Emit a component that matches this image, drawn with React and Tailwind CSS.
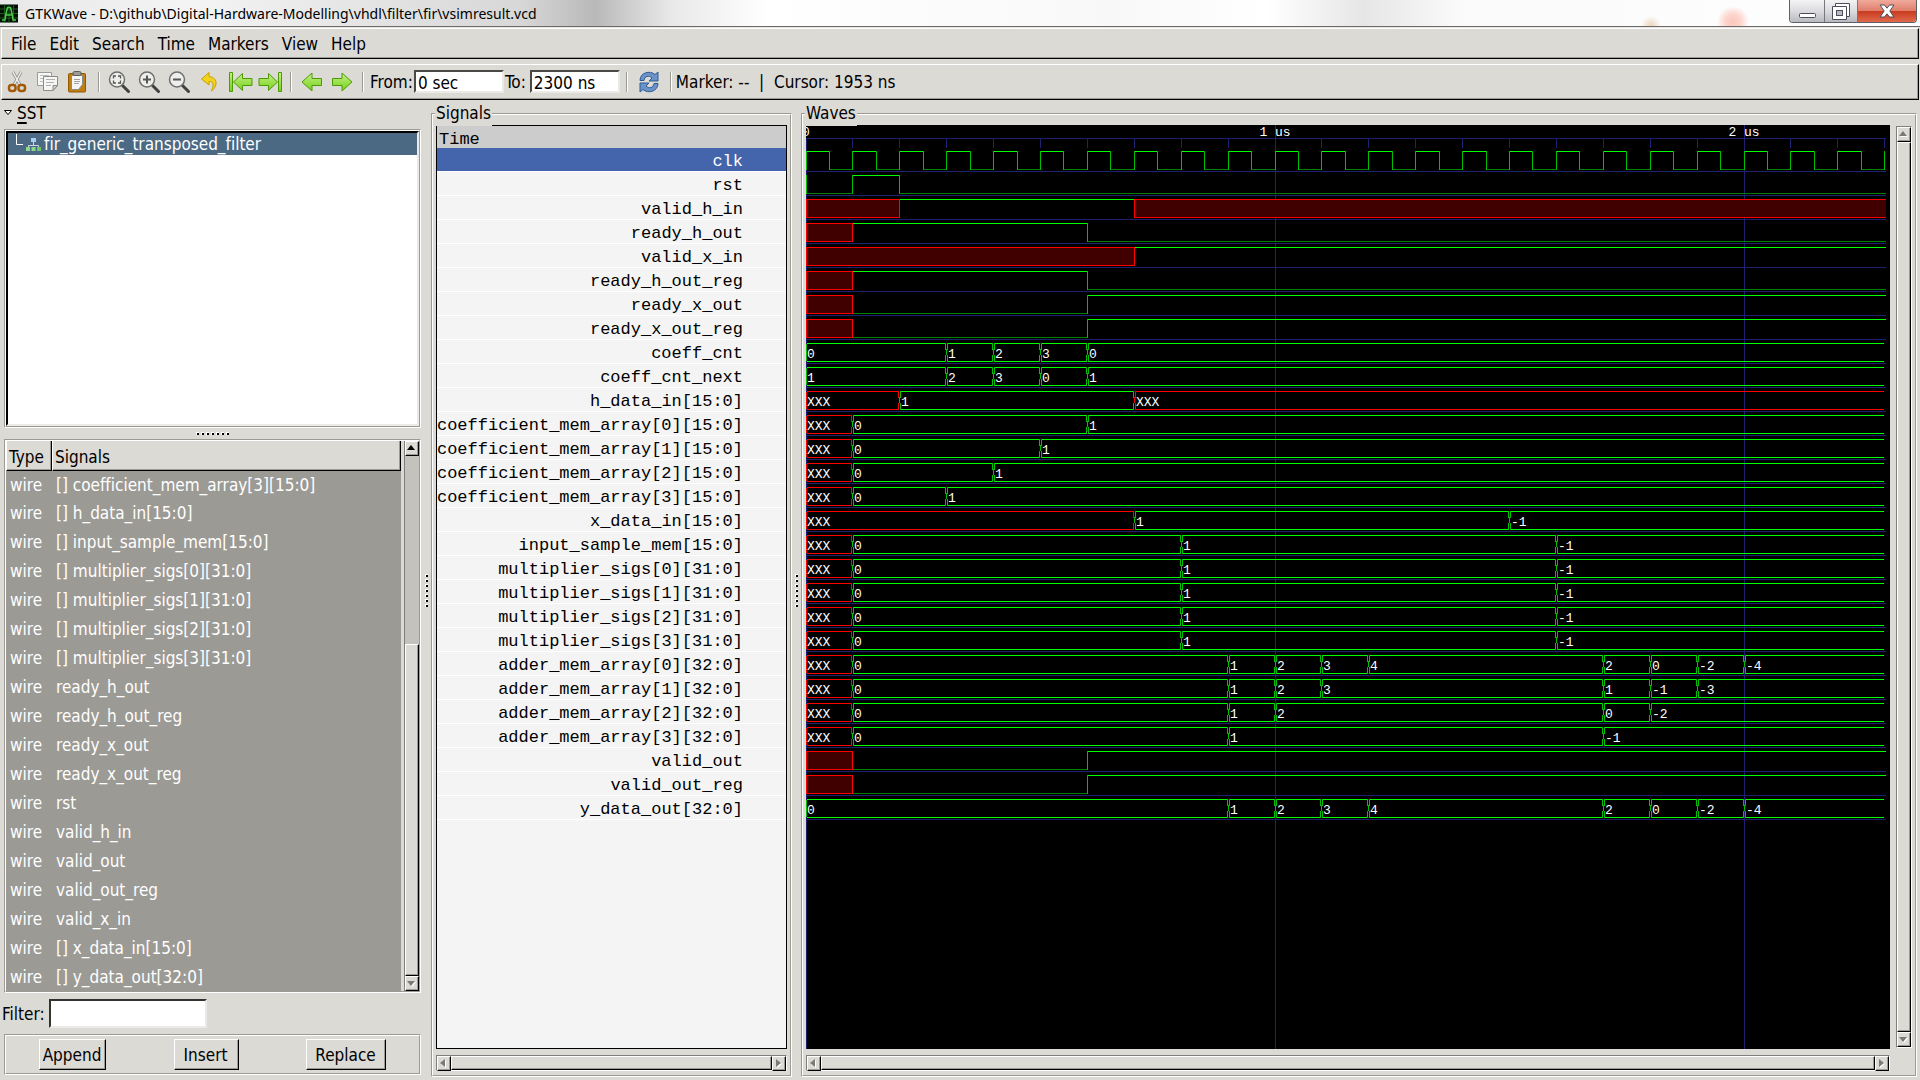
import React from "react";

/* ---------- data ---------- */

const ADDER0 = [[0, "XXX"], [1, "0"], [9, "1"], [10, "2"], [11, "3"], [12, "4"], [17, "2"], [18, "0"], [19, "-2"], [20, "-4"]];
const SAMPLE = [[0, "XXX"], [1, "0"], [8, "1"], [16, "-1"]];
const CLOCK = Array.from({ length: 47 }, (_, i) => [i / 2, i % 2 ? "0" : "1"]);

const SIGNALS = [
  { name: "clk", kind: "bit", v: CLOCK },
  { name: "rst", kind: "bit", v: [[0, "0"], [1, "1"], [2, "0"]] },
  { name: "valid_h_in", kind: "bit", v: [[0, "x"], [2, "1"], [7, "x"]] },
  { name: "ready_h_out", kind: "bit", v: [[0, "x"], [1, "1"], [6, "0"]] },
  { name: "valid_x_in", kind: "bit", v: [[0, "x"], [7, "1"]] },
  { name: "ready_h_out_reg", kind: "bit", v: [[0, "x"], [1, "1"], [6, "0"]] },
  { name: "ready_x_out", kind: "bit", v: [[0, "x"], [1, "0"], [6, "1"]] },
  { name: "ready_x_out_reg", kind: "bit", v: [[0, "x"], [1, "0"], [6, "1"]] },
  { name: "coeff_cnt", kind: "bus", v: [[0, "0"], [3, "1"], [4, "2"], [5, "3"], [6, "0"]] },
  { name: "coeff_cnt_next", kind: "bus", v: [[0, "1"], [3, "2"], [4, "3"], [5, "0"], [6, "1"]] },
  { name: "h_data_in[15:0]", kind: "bus", v: [[0, "XXX"], [2, "1"], [7, "XXX"]] },
  { name: "coefficient_mem_array[0][15:0]", kind: "bus", v: [[0, "XXX"], [1, "0"], [6, "1"]] },
  { name: "coefficient_mem_array[1][15:0]", kind: "bus", v: [[0, "XXX"], [1, "0"], [5, "1"]] },
  { name: "coefficient_mem_array[2][15:0]", kind: "bus", v: [[0, "XXX"], [1, "0"], [4, "1"]] },
  { name: "coefficient_mem_array[3][15:0]", kind: "bus", v: [[0, "XXX"], [1, "0"], [3, "1"]] },
  { name: "x_data_in[15:0]", kind: "bus", v: [[0, "XXX"], [7, "1"], [15, "-1"]] },
  { name: "input_sample_mem[15:0]", kind: "bus", v: SAMPLE },
  { name: "multiplier_sigs[0][31:0]", kind: "bus", v: SAMPLE },
  { name: "multiplier_sigs[1][31:0]", kind: "bus", v: SAMPLE },
  { name: "multiplier_sigs[2][31:0]", kind: "bus", v: SAMPLE },
  { name: "multiplier_sigs[3][31:0]", kind: "bus", v: SAMPLE },
  { name: "adder_mem_array[0][32:0]", kind: "bus", v: ADDER0 },
  { name: "adder_mem_array[1][32:0]", kind: "bus", v: [[0, "XXX"], [1, "0"], [9, "1"], [10, "2"], [11, "3"], [17, "1"], [18, "-1"], [19, "-3"]] },
  { name: "adder_mem_array[2][32:0]", kind: "bus", v: [[0, "XXX"], [1, "0"], [9, "1"], [10, "2"], [17, "0"], [18, "-2"]] },
  { name: "adder_mem_array[3][32:0]", kind: "bus", v: [[0, "XXX"], [1, "0"], [9, "1"], [17, "-1"]] },
  { name: "valid_out", kind: "bit", v: [[0, "x"], [1, "0"], [6, "1"]] },
  { name: "valid_out_reg", kind: "bit", v: [[0, "x"], [1, "0"], [6, "1"]] },
  { name: "y_data_out[32:0]", kind: "bus", v: [[0, "0"], ...ADDER0.slice(2)] },
];

const FACILITIES = [
  "[] coefficient_mem_array[3][15:0]", "[] h_data_in[15:0]", "[] input_sample_mem[15:0]",
  "[] multiplier_sigs[0][31:0]", "[] multiplier_sigs[1][31:0]", "[] multiplier_sigs[2][31:0]", "[] multiplier_sigs[3][31:0]",
  "ready_h_out", "ready_h_out_reg", "ready_x_out", "ready_x_out_reg", "rst", "valid_h_in", "valid_out", "valid_out_reg",
  "valid_x_in", "[] x_data_in[15:0]", "[] y_data_out[32:0]",
];

/* ---------- waveform drawing ---------- */

const px = (t) => Math.floor(t * 46.9 + 0.01);
const END = 1080;

function BitTrace({ v, top }) {
  const bot = top + 18;
  return v.map(([t, s], i) => {
    const a = px(t);
    const last = i === v.length - 1;
    const b = last ? (t === 23 ? a : END) : px(v[i + 1][0]);
    if (s === "x")
      return (
        <g key={i}>
          <rect x={a} y={top} width={b - a + (last ? 0 : 1)} height={19} fill="#400000" />
          <path d={`M${a} ${top}.5H${b}M${a} ${bot}.5H${b}M${a}.5 ${top}V${bot + 1}${last ? "" : `M${b}.5 ${top}V${bot + 1}`}`} stroke="#ff0000" fill="none" />
        </g>
      );
    const edge = i === 0 || v[i - 1][1] !== "x";
    const from = edge ? a : a + 1;
    return (
      <g key={i} fill="none">
        {b > a && <path d={s === "1" ? `M${from} ${top}.5H${b}` : `M${from} ${bot}.5H${b}`} stroke={s === "1" ? "#00ff00" : "#008000"} />}
        {edge && <path d={`M${a}.5 ${top}V${bot + 1}`} stroke="#00c000" />}
      </g>
    );
  });
}

function BusTrace({ v, top }) {
  const bot = top + 18;
  const mid = top + 9;
  return v.map(([t, s], i) => {
    const first = i === 0;
    const last = i === v.length - 1;
    const a = px(t);
    const b = last ? END - 2 : px(v[i + 1][0]);
    const red = s === "XXX";
    const l = first ? a + 1 : a + 2;
    const r = last ? b : b - 1;
    const side = red ? "#ff0000" : "#00c000";
    return (
      <g key={i} fill="none">
        <path d={`M${l} ${top}.5H${r}M${l} ${bot}.5H${r}`} stroke={red ? "#ff0000" : "#00ff00"} />
        <path d={first ? `M${a}.5 ${top + 1}V${bot}` : `M${a + 1}.5 ${top}V${top + 4}L${a}.5 ${mid}L${a + 1}.5 ${bot - 3}V${bot + 1}`} stroke={side} />
        {!last && <path d={`M${b - 1}.5 ${top}V${top + 4}L${b}.5 ${mid}L${b - 1}.5 ${bot - 3}V${bot + 1}`} stroke={side} />}
        <text x={first ? a + 1 : a + 2} y={top + 15} fill="#ffffff">{s}</text>
      </g>
    );
  });
}

function WaveCanvas() {
  return (
    <svg role="img" aria-label="Waveforms" className="block h-full w-full bg-black text-[13px] [font-family:'Liberation_Mono',monospace]">
      <g shapeRendering="crispEdges" stroke="#202070" fill="none">
        <path d={`M0 13.5H${END}M0.5 13V924`} />
        <path d={Array.from({ length: 23 }, (_, i) => `M${px(i + 1)}.5 13V23`).join("")} />
        <path d={SIGNALS.map((_, i) => `M0 ${46 + 24 * i}.5H${END}`).join("")} />
        <path d={`M${px(10)}.5 0V2000M${px(20)}.5 0V2000`} />
      </g>
      <g fill="#ffffff" textAnchor="middle">
        <text x="0" y="11">0</text>
        <text x={px(10)} y="11">1 us</text>
        <text x={px(20)} y="11">2 us</text>
      </g>
      <g shapeRendering="crispEdges">
        {SIGNALS.map((s, i) =>
          s.kind === "bit" ? <BitTrace key={s.name} v={s.v} top={26 + 24 * i} /> : <BusTrace key={s.name} v={s.v} top={26 + 24 * i} />
        )}
      </g>
    </svg>
  );
}

/* ---------- widgets ---------- */

function Etched({ className = "", inner = "", children }) {
  return (
    <div className={`border border-t-[#9c9a94] border-l-[#9c9a94] border-r-white border-b-white ${className}`}>
      <div className={`h-full w-full border border-t-white border-l-white border-r-[#9c9a94] border-b-[#9c9a94] ${inner}`}>{children}</div>
    </div>
  );
}

function Raised({ as: Tag = "div", className = "", inner = "", children, ...rest }) {
  return (
    <Tag className={`border border-t-white border-l-white border-r-black border-b-black bg-[#dcdad5] ${className}`} {...rest}>
      <span className={`flex h-full w-full items-center border-r border-b border-[#9c9a94] ${inner}`}>{children}</span>
    </Tag>
  );
}

const ARROWS = { up: "M0 6L4 1L8 6Z", down: "M0 2L4 7L8 2Z", left: "M6 0L1 4L6 8Z", right: "M2 0L7 4L2 8Z" };

function ScrollButton({ dir, active }) {
  return (
    <Raised as="button" type="button" aria-label={`Scroll ${dir}`} className="h-[15px] w-[14px] shrink-0" inner="justify-center">
      <svg viewBox="0 0 9 9" className="h-[9px] w-[9px]">
        {!active && <path d={ARROWS[dir]} transform="translate(1 1)" fill="#fff" />}
        <path d={ARROWS[dir]} fill={active ? "#000" : "#7c7a76"} />
      </svg>
    </Raised>
  );
}

function HScroll() {
  return (
    <div className="flex h-4 border border-t-[#807e7a] border-l-[#807e7a] border-r-white border-b-white bg-[#c3c2bd]">
      <ScrollButton dir="left" />
      <Raised className="flex-1" />
      <ScrollButton dir="right" />
    </div>
  );
}

function Dots({ vertical }) {
  return (
    <div className={`flex gap-[2px] ${vertical ? "flex-col" : ""}`}>
      {Array.from({ length: 7 }, (_, i) => (
        <span key={i} className="h-[3px] w-[3px] border-t border-l border-t-white border-l-white bg-black" />
      ))}
    </div>
  );
}

const Sep = ({ className = "" }) => <span className={`h-5 w-[2px] shrink-0 border-l border-[#9c9a94] bg-white ${className}`} />;

function Tool({ label, children, className = "w-[30px]" }) {
  return (
    <button type="button" aria-label={label} className={`flex h-7 shrink-0 items-center justify-center ${className}`}>
      <svg viewBox="0 0 24 24" className="h-6 w-6" fill="none">{children}</svg>
    </button>
  );
}

function Field({ label, value, gap }) {
  return (
    <label className={`flex items-center ${gap}`}>
      {label}
      <input defaultValue={value} className="h-[23px] w-[90px] border-2 border-t-[#4a4945] border-l-[#4a4945] border-r-[#eceae6] border-b-[#eceae6] bg-white pt-[2px] pl-[2px] outline-none" />
    </label>
  );
}

function Lens({ children }) {
  return (
    <>
      <path d="M15.5 15.5L21.5 21.5" stroke="#3f4242" strokeWidth="3" strokeLinecap="round" />
      <circle cx="10" cy="9.500" r="7.500" fill="#eeeeec" stroke="#6d706b" strokeWidth="1.500" />
      {children}
    </>
  );
}

const GREEN = { fill: "url(#green)", stroke: "#4e9a06", strokeWidth: 1, strokeLinejoin: "round" };

/* ---------- page ---------- */

function TitleBar() {
  return (
    <header className="flex h-[26px] shrink-0 items-center bg-[radial-gradient(circle_at_1651px_26px,#ecd3b8_0,transparent_10px),radial-gradient(circle_at_1733px_22px,#fbc6bb_0,#fdd6ce_8px,transparent_16px),linear-gradient(90deg,#e8e8e8_0,#f4f4f4_10%,#dcdcdc_24%,#d8d8d8_27%,#b9b9b9_31%,#e9e9e9_35%,#fff_40%,#f8f8f8_58%,#fff_66%,#e6e6e6_71%,#fafafa_76%,#fff_100%)] [font-family:'Noto_Sans',sans-serif]">
      <svg viewBox="0 0 18 18" className="h-[19px] w-[18px] shrink-0">
        <rect width="18" height="18" fill="#031003" />
        <path d="M0 4.500H18M0 9H18M0 13.500H18M4.500 0V18M9 0V18M13.500 0V18" stroke="#1c5c1c" />
        <path d="M2 15.500H5L6 9L7.500 3H10.500L12 9L13 15.500H16M6 10.500H12" stroke="#4cc84c" strokeWidth="1.500" fill="none" />
      </svg>
      <h1 className="ml-[7px] pt-[2px] text-sm text-black">GTKWave - D:\github\Digital-Hardware-Modelling\vhdl\filter\fir\vsimresult.vcd</h1>
      <div className="mr-[3px] mb-[3px] ml-auto flex h-[23px] overflow-hidden rounded-b-[4px] border border-t-0 border-[#5f5f66]">
        <button type="button" aria-label="Minimize" className="flex w-[34px] items-end justify-center bg-linear-to-b from-[#f3f3f4] via-[#dcdcdf] to-[#b9bac0] pb-[4px]">
          <svg viewBox="0 0 17 5" className="h-[5px] w-[17px]"><rect x=".5" y=".5" width="16" height="4" rx="1" fill="#fff" stroke="#4b4d5c" /></svg>
        </button>
        <button type="button" aria-label="Restore" className="flex w-[34px] items-center justify-center border-x border-[#77777e] bg-linear-to-b from-[#f3f3f4] via-[#dcdcdf] to-[#b9bac0]">
          <svg viewBox="0 0 18 17" className="h-[17px] w-[18px]">
            <path d="M3.500 .5H17.500V13.500H3.500Z" fill="#fff" stroke="#4b4d5c" />
            <path d="M.5 3.500H14.500V16.500H.5Z" fill="#fff" stroke="#4b4d5c" />
            <rect x="4.500" y="7.500" width="6" height="5" fill="#b9bac0" stroke="#4b4d5c" />
          </svg>
        </button>
        <button type="button" aria-label="Close" className="flex w-[58px] items-center justify-center bg-[linear-gradient(180deg,#f0aa9c_0,#e07f6c_48%,#c93c20_52%,#e0694c_100%)]">
          <svg viewBox="0 0 16 14" className="h-[14px] w-4">
            <path d="M1 1H5.500L8 4.200L10.500 1H15L10.800 7L15 13H10.500L8 9.800L5.500 13H1L5.200 7Z" fill="#fff" stroke="#4b4d5c" />
          </svg>
        </button>
      </div>
    </header>
  );
}

function Toolbar() {
  return (
    <Raised className="mx-px mt-[5px] h-9 shrink-0" inner="">
      <Tool label="Cut">
        <path d="M8 2L15 15M16 2L9 15" stroke="#8f918d" strokeWidth="3" />
        <path d="M8 2L15 15M16 2L9 15" stroke="#eeeeec" strokeWidth="1.500" />
        <rect x="4" y="15" width="6.500" height="6" rx="2.500" stroke="#a35a08" strokeWidth="2.500" />
        <rect x="13.500" y="15" width="6.500" height="6" rx="2.500" stroke="#a35a08" strokeWidth="2.500" />
      </Tool>
      <Tool label="Copy">
        <path d="M2.500 2.500H16.500V15.500H2.500Z" fill="#f6f6f5" stroke="#9a9c98" />
        <path d="M5 5.500H14M5 8.500H8M5 11.500H8" stroke="#bcbdb9" />
        <path d="M8.500 6.500H22.500V15.500L18 20.500H8.500Z" fill="#f6f6f5" stroke="#8a8c88" />
        <path d="M11 9.500H20M11 12.500H19M11 15.500H16" stroke="#b0b1ad" />
        <path d="M22.500 15.500H18V20.500Z" fill="#d3d4d0" stroke="#8a8c88" />
      </Tool>
      <Tool label="Paste">
        <rect x="3.500" y="3.500" width="17" height="18.500" rx="1" fill="#c17d11" stroke="#8f5902" />
        <path d="M6.500 5.500H17.500V14.500L13.500 19.500H6.500Z" fill="#f6f6f5" stroke="#8a8c88" />
        <path d="M9 9.500H15M9 11.500H15M9 13.500H14" stroke="#a0a19d" />
        <rect x="8" y="1.500" width="8" height="4" rx="1.500" fill="#9a9c98" stroke="#5b5d59" />
      </Tool>
      <Sep className="mr-[4px] ml-[6px]" />
      <Tool label="Zoom fit">
        <Lens><path d="M6.500 8.500V6H9M11 6H13.500V8.500M13.500 10.500V13H11M9 13H6.500V10.500" stroke="#555753" strokeWidth="1.300" /></Lens>
      </Tool>
      <Tool label="Zoom in"><Lens><path d="M6 9.500H14M10 5.500V13.500" stroke="#555753" strokeWidth="2" /></Lens></Tool>
      <Tool label="Zoom out"><Lens><path d="M6 9.500H14" stroke="#555753" strokeWidth="2" /></Lens></Tool>
      <Tool label="Zoom undo" className="w-8">
        <path d="M11 2.500L3.500 9L11 15V11.500C15 11.500 16.500 14 13.500 21C19 17 21 8 11 6.500Z" fill="#f4d21c" stroke="#c4a000" strokeLinejoin="round" />
      </Tool>
      <Tool label="Zoom to start" className="w-[29px]">
        <rect x=".5" y="2.500" width="3" height="19" {...GREEN} />
        <path d="M4.500 12L13.500 3.500V8.500H23V15.500H13.500V20.500Z" {...GREEN} />
      </Tool>
      <Tool label="Zoom to end" className="w-[29px]">
        <rect x="20.500" y="2.500" width="3" height="19" {...GREEN} />
        <path d="M19.500 12L10.500 3.500V8.500H1V15.500H10.500V20.500Z" {...GREEN} />
      </Tool>
      <Sep className="mr-[5px] ml-[6px]" />
      <Tool label="Previous edge"><path d="M2 12L12 3V8.500H21.500V15.500H12V21Z" {...GREEN} /></Tool>
      <Tool label="Next edge"><path d="M22 12L12 3V8.500H2.500V15.500H12V21Z" {...GREEN} /></Tool>
      <Sep className="mr-[6px] ml-[5px]" />
      <Field label="From:" value="0 sec" gap="gap-px" />
      <Field label="To:" value="2300 ns" gap="ml-px gap-[4px]" />
      <Sep className="mr-[4px] ml-[6px]" />
      <Tool label="Reload" className="w-[34px]">
        <path d="M3 10.500C3 2.500 13 0 18 4.500L21 2V11H12L15 8C12 5 7.500 6 7 10.500Z" fill="#6a94c8" stroke="#2e5a94" strokeLinejoin="round" />
        <path d="M21 13.500C21 21.500 11 24 6 19.500L3 22V13H12L9 16C12 19 16.500 18 17 13.500Z" fill="#6a94c8" stroke="#2e5a94" strokeLinejoin="round" />
      </Tool>
      <Sep className="mr-[4px] ml-[4px]" />
      <span className="pt-px whitespace-pre">Marker: --  |  Cursor: 1953 ns</span>
    </Raised>
  );
}

function LeftPane() {
  return (
    <aside className="ml-1 flex w-[417px] shrink-0 flex-col">
      <button type="button" className="flex h-[29px] shrink-0 items-center pb-[3px] text-left">
        <svg viewBox="0 0 8 6" className="h-[6px] w-2"><path d="M.5 .5H7.500L4 4.500Z" fill="#fff" stroke="#000" /></svg>
        <span className="ml-[5px] underline decoration-2 underline-offset-[3px]">S</span>ST
      </button>
      <Etched className="h-[299px] shrink-0">
        <div className="h-full border-2 border-t-black border-l-black border-r-[#eceae6] border-b-[#eceae6] bg-white">
          <div className="flex h-[22px] items-center bg-[#4b6983] text-white">
            <svg viewBox="0 0 34 20" className="h-5 w-[34px] shrink-0" fill="none">
              <path d="M8.500 0V10.500H15" stroke="#fff" />
              <path d="M25.500 7V11M20.500 14V11.500H30.500V14" stroke="#cfd8e2" />
              <rect x="23" y="4" width="5" height="4" fill="#a9cdf5" />
              <rect x="18" y="13" width="4" height="4" fill="#8fd78a" />
              <rect x="23.500" y="13" width="4" height="4" fill="#8fd78a" />
              <rect x="29" y="13" width="4" height="4" fill="#6fc468" />
            </svg>
            <span className="ml-[2px]">fir_generic_transposed_filter</span>
          </div>
        </div>
      </Etched>
      <div className="flex h-[11px] shrink-0 items-center justify-center"><Dots /></div>
      <Etched className="min-h-0 flex-1" inner="flex gap-[3px]">
        <div className="flex min-w-0 flex-1 flex-col">
          <div className="flex min-h-0 flex-1 flex-col justify-end overflow-hidden bg-[#9c9a94] text-white">
            <table className="w-full table-fixed border-collapse">
              <thead className="relative z-10 text-black">
                <tr>
                  <th className="h-[31px] w-[46px] p-0 text-left font-normal"><Raised className="h-[31px]" inner="pt-[3px] pl-[2px]">Type</Raised></th>
                  <th className="h-[31px] p-0 text-left font-normal"><Raised className="h-[31px]" inner="pt-[3px] pl-[2px]">Signals</Raised></th>
                </tr>
              </thead>
              <tbody>
                {FACILITIES.map((f, i) => (
                  <tr key={f}>
                    <td className={i === 0 ? "h-[27px] p-0 pl-1" : "h-[29px] p-0 pl-1"}>wire</td>
                    <td className="p-0 pl-1 whitespace-nowrap">{f}</td>
                  </tr>
                ))}
              </tbody>
            </table>
          </div>
        </div>
        <div className="flex w-[15px] shrink-0 flex-col border-l border-[#807e7a] bg-[#c3c2bd]">
          <ScrollButton dir="up" active />
          <div className="flex-[188]" />
          <Raised className="flex-[331]" />
          <ScrollButton dir="down" />
        </div>
      </Etched>
      <label className="mt-[6px] -ml-1 flex h-[29px] shrink-0 items-center gap-[4px] pl-[2px]">
        Filter:
        <input className="h-[29px] w-[158px] border-2 border-t-[#33322f] border-l-[#33322f] border-r-[#eceae6] border-b-[#eceae6] bg-white outline-none" />
      </label>
      <Etched className="mt-[6px] mb-[5px] h-[41px] shrink-0" inner="flex items-center justify-between pr-[33px] pl-[33px]">
        {["Append", "Insert", "Replace"].map((b) => (
          <Raised key={b} as="button" type="button" className={{ Append: "h-[31px] w-[67px]", Insert: "h-[31px] w-[65px]", Replace: "h-[31px] w-[80px]" }[b]} inner="justify-center pt-[2px]">{b}</Raised>
        ))}
      </Etched>
    </aside>
  );
}

function Frame({ title, className, children }) {
  return (
    <section className={`relative pt-[13px] pb-[3px] ${className}`}>
      <h2 className="absolute top-0 left-[4px] bg-[#dcdad5] pr-px pl-px leading-[26px]">{title}</h2>
      <Etched className="h-full" inner="p-[3px] pt-[10px] pb-1">{children}</Etched>
    </section>
  );
}

export default function App() {
  return (
    <div className="flex h-screen min-w-[1100px] flex-col overflow-hidden bg-[#dcdad5] text-[17px] leading-5 text-black [font-family:'DejaVu_Sans_Condensed','DejaVu_Sans',sans-serif] [font-variant-ligatures:none]">
      <svg className="absolute h-0 w-0" aria-hidden="true">
        <linearGradient id="green" x1="0" y1="0" x2="0" y2="1">
          <stop offset="0" stopColor="#c4f08a" />
          <stop offset="1" stopColor="#73d216" />
        </linearGradient>
      </svg>
      <TitleBar />
      <div className="h-[2px] shrink-0 border-t border-[#6b6b6b] bg-[#e6e5e2]" />
      <Raised as="nav" className="mx-px h-[31px] shrink-0" inner="pt-[2px] pl-[2px]">
        {["File", "Edit", "Search", "Time", "Markers", "View", "Help"].map((m) => (
          <button key={m} type="button" className="pr-[6px] pl-[7px]">{m}</button>
        ))}
      </Raised>
      <Toolbar />
      <main className="flex min-h-0 flex-1">
        <LeftPane />
        <div className="flex w-[10px] shrink-0 items-center justify-center"><Dots vertical /></div>
        <Frame title="Signals" className="w-[361px] shrink-0">
          <div className="flex h-full flex-col gap-[6px]">
            <div className="min-h-0 flex-1 overflow-hidden border border-black bg-[#f4f4f4] text-[17px] [font-family:'Liberation_Mono',monospace]">
              <div className="flex h-[22px] items-center bg-[#cccccc] pt-[6px] pl-[2px]">Time</div>
              <ul>
                {SIGNALS.map((s, i) => (
                  <li key={s.name} className={`flex h-6 items-center justify-end border-b border-white pt-[4px] pr-[43px] whitespace-nowrap ${i === 0 ? "bg-[#4464ac] text-white" : ""}`}>{s.name}</li>
                ))}
              </ul>
            </div>
            <HScroll />
          </div>
        </Frame>
        <div className="flex w-[9px] shrink-0 items-center justify-center"><Dots vertical /></div>
        <Frame title="Waves" className="mr-[3px] min-w-0 flex-1">
          <div className="flex h-full gap-[6px]">
            <div className="flex min-w-0 flex-1 flex-col gap-[6px]">
              <div className="min-h-0 flex-1"><WaveCanvas /></div>
              <HScroll />
            </div>
            <div className="mt-px mb-[23px] flex w-4 shrink-0 flex-col border border-t-[#807e7a] border-l-[#807e7a] border-r-white border-b-white">
              <ScrollButton dir="up" />
              <Raised className="flex-1" />
              <ScrollButton dir="down" />
            </div>
          </div>
        </Frame>
      </main>
    </div>
  );
}
